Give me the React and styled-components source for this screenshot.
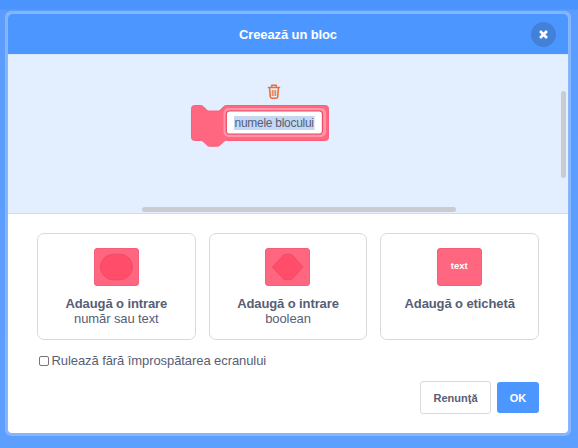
import React from 'react';
import styled, { createGlobalStyle } from 'styled-components';

const GlobalStyle = createGlobalStyle`
  * { box-sizing: border-box; }
  body {
    margin: 0;
    font-family: "Liberation Sans", Arial, sans-serif;
    color: #575e75;
    overflow: hidden;
  }
  button { font-family: inherit; color: inherit; }
`;

const Overlay = styled.div`
  height: 448px;
  padding: 11px 7px 0 5px;
  background: linear-gradient(#4b94fd 0, #4b94fd 9px, #5a9dff 10px, #5c9fff 100%);
`;

const Modal = styled.div`
  height: 425px;
  border: 3px solid #84b6ff;
  border-radius: 6px;
  background: #84b6ff;
`;

const Content = styled.div`
  height: 419px;
  display: flex;
  flex-direction: column;
  border-radius: 4px;
  overflow: hidden;
  background: #fff;
`;

const Header = styled.header`
  flex: none;
  height: 40px;
  display: grid;
  grid-template-columns: 50px 1fr 50px;
  align-items: center;
  background: #4c97ff;
  color: #fff;
`;

const Title = styled.h1`
  grid-column: 2;
  margin: 0;
  padding-top: 1px;
  font-size: 13px;
  line-height: 16px;
  letter-spacing: -0.12px;
  text-align: center;
  white-space: nowrap;
`;

const CloseButton = styled.button`
  width: 25px;
  height: 25px;
  padding: 0;
  justify-self: end;
  margin-right: 12px;
  border: 0;
  border-radius: 50%;
  display: grid;
  place-items: center;
  background: #4280d9;
`;

const Workspace = styled.section`
  flex: none;
  position: relative;
  height: 160px;
  border-top: 1px solid #dce8f8;
  border-bottom: 1px solid #d5dce6;
  background: #e3effe;
`;

const BlockDrawing = styled.svg`
  position: absolute;
  left: 182px;
  top: 27px;
`;

const Scrollbar = styled.div`
  position: absolute;
  border-radius: 3px;
  background: #cbcccf;
  ${({ $vertical }) =>
    $vertical
      ? 'right: 2px; top: 36px; width: 5px; height: 87px;'
      : 'left: 134px; bottom: 1px; width: 314px; height: 5px;'}
`;

const Body = styled.div`
  padding: 19px 29px 0;
`;

const Options = styled.div`
  display: grid;
  grid-template-columns: repeat(3, 1fr);
  gap: 13px;
`;

const OptionCard = styled.button`
  height: 107px;
  padding: 14px 0 0;
  display: flex;
  flex-direction: column;
  align-items: center;
  border: 1px solid #d9d9d9;
  border-radius: 7px;
  background: #fff;
`;

const OptionIcon = styled.svg`
  display: block;
  margin-bottom: 10px;
`;

const OptionText = styled.span`
  font-size: 13px;
  line-height: 15px;
  font-weight: ${({ $strong }) => ($strong ? 700 : 400)};
  letter-spacing: -0.1px;
`;

const CheckLabel = styled.label`
  display: flex;
  align-items: center;
  gap: 2.5px;
  margin: 13px 0 0 2px;
  height: 15px;
  font-size: 13px;
  line-height: 15px;
  letter-spacing: -0.08px;
`;

const Checkbox = styled.input`
  appearance: none;
  width: 10px;
  height: 10px;
  margin: 0;
  border: 1px solid #767676;
  border-radius: 2px;
  background: #fff;
`;

const Actions = styled.div`
  display: flex;
  justify-content: flex-end;
  align-items: center;
  gap: 6px;
  margin-top: 13px;
`;

const ActionButton = styled.button`
  width: ${({ $primary }) => ($primary ? 42 : 71)}px;
  height: ${({ $primary }) => ($primary ? 31 : 33)}px;
  padding: ${({ $primary }) => ($primary ? '1px 0 0' : '0')};
  border: ${({ $primary }) => ($primary ? '0' : '1px solid #d9d9d9')};
  border-radius: 3px;
  font-size: 11px;
  font-weight: 700;
  background: ${({ $primary }) => ($primary ? '#4c97ff' : '#fff')};
  && { color: ${({ $primary }) => ($primary ? '#fff' : '#575e75')}; }
`;

function CustomBlock() {
  return (
    <BlockDrawing width="140" height="68" viewBox="190 82 140 68">
      <g fill="none" stroke="#e9703a" strokeWidth="1.6" strokeLinecap="round" strokeLinejoin="round">
        <path d="M268.5 87.5H279.5M271.7 87V85.2H276.3V87" />
        <path d="M269.6 88.5L270.3 96.8Q270.4 98.2 271.7 98.2H276.3Q277.6 98.2 277.7 96.8L278.4 88.5" />
        <path d="M272.3 90.5V95.6M274 90.5V95.6M275.7 90.5V95.6" strokeWidth="1" />
      </g>
      <path
        d="M191.5 108.5a3 3 0 0 1 3-3H200.5C202 105.5 202.7 106 203.5 106.8L206.5 109.8C207.3 110.6 208 111 209.5 111H217.5C219 111 219.7 110.6 220.5 109.8L223.5 106.8C224.3 106 225 105.5 226.5 105.5H325.5a3 3 0 0 1 3 3V137.5a3 3 0 0 1-3 3H226.5C225 140.5 224.3 141 223.5 141.8L220.5 144.8C219.7 145.6 219 146.2 217.5 146.2H209.5C208 146.2 207.3 145.6 206.5 144.8L203.5 141.8C202.7 141 202 140.5 200.5 140.5H194.5a3 3 0 0 1-3-3Z"
        fill="#ff6680"
        stroke="#fa607c"
      />
      <rect x="223.5" y="108" width="102.5" height="29" rx="5" fill="#ff95a7" />
      <rect x="226.3" y="110.8" width="96.2" height="23.4" rx="3.5" fill="#fff" stroke="#ee4b6c" strokeWidth="1.3" />
      <rect x="234" y="116" width="80.5" height="14" fill="#c4d8f3" />
      <text x="234.5" y="127" fontSize="12" fill="#575e75" textLength="79.5">numele blocului</text>
    </BlockDrawing>
  );
}

function InputIcon({ kind }) {
  return (
    <OptionIcon width="45" height="38" viewBox="0 0 45 38">
      <rect x=".5" y=".5" width="44" height="37" rx="2.5" fill="#ff6680" stroke="#f45f7b" />
      {kind === 'number' && (
        <rect x="6.5" y="6.2" width="32" height="25.6" rx="12.8" fill="#ff4d6a" stroke="#ee4865" strokeWidth=".8" />
      )}
      {kind === 'boolean' && (
        <path d="M7.4 19L18.2 7.2Q19.2 6.3 20.5 6.3H25Q26.3 6.3 27.3 7.2L38.1 19L27.3 30.8Q26.3 31.7 25 31.7H20.5Q19.2 31.7 18.2 30.8Z" fill="#ff4d6a" stroke="#ee4865" strokeWidth=".8" />
      )}
      {kind === 'label' && (
        <text x="22.3" y="21" fontSize="9.5" fontWeight="700" fill="#fff" textAnchor="middle">text</text>
      )}
    </OptionIcon>
  );
}

const options = [
  { kind: 'number', title: 'Adaugă o intrare', detail: 'număr sau text' },
  { kind: 'boolean', title: 'Adaugă o intrare', detail: 'boolean' },
  { kind: 'label', title: 'Adaugă o etichetă' },
];

export default function App() {
  return (
    <>
      <GlobalStyle />
      <Overlay>
        <Modal>
          <Content>
            <Header>
              <Title>Creează un bloc</Title>
              <CloseButton aria-label="Închide">
                <svg width="9" height="9" viewBox="0 0 9 9">
                  <path d="M2 2L7 7M7 2L2 7" stroke="#fff" strokeWidth="2.7" strokeLinecap="square" />
                </svg>
              </CloseButton>
            </Header>
            <Workspace>
              <CustomBlock />
              <Scrollbar $vertical />
              <Scrollbar />
            </Workspace>
            <Body>
              <Options>
                {options.map(({ kind, title, detail }) => (
                  <OptionCard key={kind}>
                    <InputIcon kind={kind} />
                    <OptionText $strong>{title}</OptionText>
                    {detail && <OptionText>{detail}</OptionText>}
                  </OptionCard>
                ))}
              </Options>
              <CheckLabel>
                <Checkbox type="checkbox" />
                Rulează fără împrospătarea ecranului
              </CheckLabel>
              <Actions>
                <ActionButton>Renunţă</ActionButton>
                <ActionButton $primary>OK</ActionButton>
              </Actions>
            </Body>
          </Content>
        </Modal>
      </Overlay>
    </>
  );
}
